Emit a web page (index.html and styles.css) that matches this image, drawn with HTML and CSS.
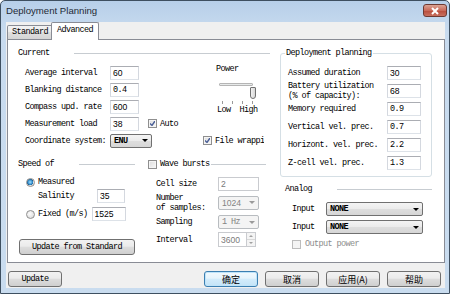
FILE: index.html
```html
<!DOCTYPE html>
<html lang="en">
<head>
    <meta charset="UTF-8">
    <title>Deployment Planning</title>
    <link rel="stylesheet" href="styles.css">
</head>
<body>
<div class="window">
    <div class="titlebar">
        <span class="title">Deployment Planning</span>
        <span class="close">
            <svg width="10" height="8" viewBox="0 0 10 8"><path d="M2 1 L8 7 M8 1 L2 7" stroke="#fff" stroke-width="2"/></svg>
        </span>
    </div>
    <div class="client">
        <div class="tabs">
            <div class="tab">Standard</div>
            <div class="tab active">Advanced</div>
        </div>
        <div class="pane">
            <div class="col-left">
                <div class="sec-head current-head"><span>Current</span><i class="rule"></i></div>
                <div class="current">
                    <span class="lbl">Average interval</span>
                    <input class="field sans w29" value="60">
                    <div class="power">
                        <div class="power-title">Power</div>
                        <div class="slider">
                            <div class="track"></div>
                            <div class="thumb"></div>
                        </div>
                        <div class="ticks"><i></i><i></i><i></i><i></i></div>
                        <div class="lowhigh"><span>Low</span><span>High</span></div>
                    </div>
                    <span class="lbl">Blanking distance</span>
                    <input class="field w29" value="0.4">
                    <span class="lbl">Compass upd. rate</span>
                    <input class="field sans w29" value="600">
                    <span class="lbl">Measurement load</span>
                    <div class="inline">
                        <input class="field sans w29" value="38">
                        <span class="check checked auto-check"></span><span>Auto</span>
                    </div>
                    <span class="lbl">Coordinate system:</span>
                    <div class="combo w42"><b>ENU</b><span class="arrow"></span></div>
                    <div class="inline clip"><span class="check checked"></span><span>File wrapping</span></div>
                </div>
                <div class="lower">
                    <div class="speed">
                        <div class="sec-head"><span>Speed of</span><i class="rule"></i></div>
                        <div class="radio-row first"><span class="radio on"></span><span>Measured</span></div>
                        <div class="salinity"><span class="lbl-sal">Salinity</span><input class="field sans w28" value="35"></div>
                        <div class="radio-row fixed"><span class="radio"></span><span>Fixed (m/s)</span><input class="field sans w34" value="1525"></div>
                        <div class="btn update-std">Update from Standard</div>
                    </div>
                    <div class="wave">
                        <div class="sec-head wave-head"><span class="check"></span><span class="wave-title">Wave bursts</span><i class="rule"></i></div>
                        <div class="wrow cell"><span class="wlbl">Cell size</span><input class="field sans w41" value="2" disabled></div>
                        <div class="wrow samples"><span class="wlbl">Number<br>of samples:</span><div class="combo w41 off"><span class="sans">1024</span><span class="arrow"></span></div></div>
                        <div class="wrow sampling"><span class="wlbl">Sampling</span><div class="combo w41 off"><span>1 Hz</span><span class="arrow"></span></div></div>
                        <div class="wrow interval"><span class="wlbl">Interval</span><input class="field sans w29 spin-field" value="3600" disabled><span class="spin"><i class="up"></i><i class="down"></i></span></div>
                    </div>
                </div>
            </div>
            <div class="col-right">
                <div class="group">
                    <div class="group-title">Deployment planning</div>
                    <div class="grow first"><span class="glbl">Assumed duration</span><input class="field sans w34" value="30"></div>
                    <div class="grow"><span class="glbl two">Battery utilization<br>(% of capacity):</span><input class="field sans w34" value="68"></div>
                    <div class="grow"><span class="glbl">Memory required</span><input class="field w34" value="0.9"></div>
                    <div class="grow"><span class="glbl">Vertical vel. prec.</span><input class="field w34" value="0.7"></div>
                    <div class="grow"><span class="glbl">Horizont. vel. prec.</span><input class="field w34" value="2.2"></div>
                    <div class="grow"><span class="glbl">Z-cell vel. prec.</span><input class="field w34" value="1.3"></div>
                </div>
                <div class="sec-head analog-head"><span>Analog</span><i class="rule"></i></div>
                <div class="arow first"><span class="albl">Input</span><div class="combo w97"><b>NONE</b><span class="arrow"></span></div></div>
                <div class="arow"><span class="albl">Input</span><div class="combo w97"><b>NONE</b><span class="arrow"></span></div></div>
                <div class="arow out"><span class="check off"></span><span class="grey">Output power</span></div>
            </div>
        </div>
        <div class="buttons">
            <div class="btn">Update</div>
            <div class="btn cjk default">确定</div>
            <div class="btn cjk">取消</div>
            <div class="btn cjk">应用(A)</div>
            <div class="btn cjk">帮助</div>
        </div>
    </div>
</div>
</body>
</html>
```
FILE: styles.css
```css
body {
    margin: 0;
    width: 450px;
    height: 294px;
    overflow: hidden;
    background: #fff;
    font-family: "Liberation Mono", monospace;
    font-size: 8.5px;
    letter-spacing: -0.6px;
    color: #000;
}
.window {
    width: 450px;
    height: 294px;
    box-sizing: border-box;
    border: 1px solid #3e4f60;
    border-radius: 5px 5px 0 0;
    background: linear-gradient(#b7cfe9, #c8dbef 30px, #c9dcef);
    display: flex;
    flex-direction: column;
}
.titlebar {
    height: 21px;
    flex: none;
    display: flex;
    align-items: center;
    padding: 0 2px 2px 5px;
    box-sizing: border-box;
}
.title {
    font-family: "Liberation Sans", Arial, sans-serif;
    font-size: 9.6px;
    letter-spacing: 0;
    color: #1e2a36;
}
.close {
    margin-left: auto;
    align-self: flex-start;
    margin-top: 3px;
    width: 24px;
    height: 13px;
    box-sizing: border-box;
    border: 1px solid #6e3a33;
    border-radius: 3px;
    background: linear-gradient(#dba394, #c96a5a 50%, #b84b3b 51%, #c8705f);
    display: flex;
    align-items: center;
    justify-content: center;
}
.client {
    flex: 1;
    margin: 0 4px 5px 5px;
    background: #f0f0f0;
    display: flex;
    flex-direction: column;
    padding-left: 1px;
}
.tabs {
    height: 17px;
    flex: none;
    display: flex;
    align-items: flex-end;
}
.tab {
    width: 46px;
    height: 14px;
    box-sizing: border-box;
    border: 1px solid #898c95;
    border-bottom: none;
    border-radius: 2px 2px 0 0;
    background: linear-gradient(#f3f3f3, #ebebeb 50%, #dfdfdf 50%, #d5d5d5);
    text-align: center;
    line-height: 13px;
}
.tab.active {
    width: 48px;
    height: 18px;
    margin-left: -2px;
    margin-bottom: -1px;
    background: #fff;
    position: relative;
    z-index: 1;
    line-height: 15px;
}
.pane {
    height: 224px;
    flex: none;
    box-sizing: border-box;
    border: 1px solid #898c95;
    background: #fff;
    display: flex;
}
.col-left {
    width: 262px;
    flex: none;
    padding-left: 10px;
    box-sizing: border-box;
}
.sec-head {
    display: flex;
    align-items: center;
    height: 12px;
    white-space: nowrap;
}
.rule {
    flex: 1;
    height: 1px;
    background: #c7ccd1;
    margin-left: 24px;
}
.current-head {
    margin-top: 7px;
}
.current {
    margin-top: 5px;
    padding-left: 7px;
    display: grid;
    grid-template-columns: 85px 93px 1fr;
    grid-auto-rows: 17px;
    align-items: center;
}
.current .lbl {
    grid-column: 1;
    white-space: nowrap;
}
.inline {
    display: flex;
    align-items: center;
    white-space: nowrap;
}
.clip {
    width: 61px;
    overflow: hidden;
}
.clip .check {
    margin-right: 3px;
}
.auto-check {
    margin: 0 3px 0 9px;
}
.field {
    height: 14px;
    box-sizing: border-box;
    border: 1px solid #abadb3;
    border-color: #abadb3 #d4d8df #dde2e8 #d4d8df;
    padding: 0 2px;
    margin: 0;
    font: inherit;
    letter-spacing: inherit;
    color: #000;
    background: #fff;
    outline: none;
}
.field:disabled {
    color: #7a7a7a;
    border-color: #c9cbcf;
}
.sans {
    font-family: "Liberation Sans", Arial, sans-serif;
    font-size: 8.6px;
    letter-spacing: 0;
}
.w28 { width: 28px; }
.w29 { width: 29px; }
.w34 { width: 34px; }
.w41 { width: 41px; }
.w42 { width: 42px; }
.w97 { width: 97px; }
.power {
    grid-column: 3;
    grid-row: 1 / span 3;
    align-self: start;
    padding-left: 13px;
}
.power-title {
    height: 10px;
    line-height: 10px;
}
.slider {
    position: relative;
    width: 38px;
    height: 18px;
    margin-left: 3px;
}
.track {
    margin-top: 9px;
    width: 34px;
    height: 3px;
    box-sizing: border-box;
    border: 1px solid #b5b5b5;
    border-radius: 1px;
    background: #e7eaea;
}
.thumb {
    position: absolute;
    left: 31px;
    top: 4px;
    width: 6px;
    height: 12px;
    box-sizing: border-box;
    border: 1px solid #707070;
    border-radius: 1px 1px 3px 3px;
    background: linear-gradient(90deg, #f2f2f2, #d6d6d6);
}
.ticks {
    width: 31px;
    margin-left: 6px;
    height: 4px;
    display: flex;
    justify-content: space-between;
}
.ticks i {
    width: 1px;
    height: 3px;
    background: #9a9a9a;
}
.lowhigh {
    display: flex;
    gap: 9px;
    margin-left: 1px;
    height: 10px;
    line-height: 10px;
}
.check {
    width: 9px;
    height: 9px;
    flex: none;
    box-sizing: border-box;
    border: 1px solid #8f8f8f;
    background: linear-gradient(135deg, #dcdcdc, #f8f8f8);
    box-shadow: inset 0 0 0 1px #f4f4f4;
    display: inline-block;
}
.check.checked {
    background: url("data:image/svg+xml,%3Csvg xmlns='http://www.w3.org/2000/svg' width='7' height='7'%3E%3Cpath d='M1 3.5 L3 5.5 L6 1' fill='none' stroke='%234a5f97' stroke-width='1.4'/%3E%3C/svg%3E") center no-repeat, linear-gradient(135deg, #dcdcdc, #f8f8f8);
}
.check.off {
    border-color: #bcbcbc;
    background: #f4f4f4;
}
.grey {
    color: #8d8d8d;
}
.combo {
    height: 14px;
    box-sizing: border-box;
    border: 1px solid #707070;
    border-radius: 2px;
    background: linear-gradient(#f4f4f4, #ebebeb 50%, #dedede 50%, #d6d6d6);
    display: flex;
    align-items: center;
    padding: 0 3px 0 3px;
    white-space: nowrap;
}
.combo .arrow {
    margin-left: auto;
    width: 0;
    height: 0;
    border-left: 3px solid transparent;
    border-right: 3px solid transparent;
    border-top: 3px solid #000;
}
.combo.off {
    border-color: #b8bcc0;
    background: #f4f4f4;
    color: #838383;
}
.combo.off .arrow {
    border-top-color: #9a9a9a;
}
.lower {
    display: flex;
    margin-top: 9px;
}
.speed {
    width: 117px;
    flex: none;
}
.speed .rule {
    margin-left: 25px;
}
.radio-row {
    display: flex;
    align-items: center;
    padding-left: 8px;
    white-space: nowrap;
}
.radio-row.first {
    height: 12px;
    margin-top: 6px;
}
.radio-row.fixed {
    height: 14px;
    margin-top: 4px;
}
.radio {
    width: 9px;
    height: 9px;
    box-sizing: border-box;
    border: 1px solid #8f8f8f;
    border-radius: 50%;
    background: radial-gradient(circle at 40% 40%, #fcfcfc, #d4d4d4);
    margin-right: 3px;
    flex: none;
}
.radio.on {
    background: radial-gradient(circle at 45% 45%, #9ee0ff 0, #2c85c5 45%, #1d5a8a 55%, #e6e6e6 62%, #d0d0d0);
}
.fixed .field {
    margin-left: 4px;
}
.salinity {
    display: flex;
    align-items: center;
    height: 14px;
    margin-top: 1px;
    padding-left: 20px;
}
.lbl-sal {
    width: 59px;
}
.btn {
    height: 16px;
    box-sizing: border-box;
    border: 1px solid #707070;
    border-radius: 3px;
    background: linear-gradient(#f2f2f2, #ebebeb 45%, #dddddd 50%, #cfcfcf);
    display: flex;
    align-items: center;
    justify-content: center;
    white-space: nowrap;
}
.update-std {
    width: 116px;
    margin: 18px 0 0 1px;
}
.wave {
    width: 119px;
    flex: none;
    margin-left: 12px;
}
.wave-head {
    padding-left: 1px;
}
.wave-title {
    margin-left: 3px;
}
.wave-head .rule {
    margin-left: 1px;
}
.wrow {
    display: flex;
    align-items: center;
    padding-left: 9px;
}
.wlbl {
    width: 62px;
    flex: none;
    line-height: 10px;
    white-space: nowrap;
}
.wrow.cell {
    height: 14px;
    margin-top: 7px;
}
.wrow.samples {
    height: 17px;
    margin-top: 3px;
}
.wrow.sampling {
    height: 14px;
    margin-top: 4px;
}
.wrow.interval {
    height: 15px;
    margin-top: 3px;
}
.spin-field {
    height: 15px;
}
.spin {
    width: 9px;
    height: 15px;
    box-sizing: border-box;
    border: 1px solid #c9cbcf;
    border-left: none;
    display: flex;
    flex-direction: column;
    background: #f4f4f4;
}
.spin i {
    flex: 1;
    display: flex;
    align-items: center;
    justify-content: center;
}
.spin .up {
    border-bottom: 1px solid #d8d8d8;
}
.spin .up::before {
    content: "";
    border-left: 2px solid transparent;
    border-right: 2px solid transparent;
    border-bottom: 2px solid #a0a0a0;
}
.spin .down::before {
    content: "";
    border-left: 2px solid transparent;
    border-right: 2px solid transparent;
    border-top: 2px solid #a0a0a0;
}
.col-right {
    width: 152px;
    flex: none;
    margin-left: 10px;
}
.group {
    margin-top: 13px;
    height: 124px;
    box-sizing: border-box;
    border: 1px solid #d5dfe5;
    border-radius: 3px;
    padding-left: 7px;
}
.group-title {
    margin: -7px 0 0 -3px;
    width: fit-content;
    padding: 0 1px;
    height: 12px;
    line-height: 12px;
    background: #fff;
}
.grow {
    display: flex;
    align-items: center;
    height: 18px;
}
.grow.first {
    margin-top: 5px;
}
.glbl {
    width: 99px;
    flex: none;
    white-space: nowrap;
    line-height: 10px;
}
.analog-head {
    margin-top: 6px;
    padding-left: 5px;
}
.analog-head .rule {
    margin-left: 25px;
}
.arow {
    display: flex;
    align-items: center;
    height: 14px;
    margin-top: 4px;
    padding-left: 12px;
}
.arow.first {
    margin-top: 7px;
}
.arow.out {
    height: 12px;
}
.arow.out .check {
    margin-right: 4px;
}
.albl {
    width: 34px;
    flex: none;
}
.buttons {
    display: flex;
    gap: 7px;
    margin-top: 8px;
    padding: 0 4px 0 1px;
}
.buttons .btn {
    width: 54px;
}
.buttons .btn:first-child {
    margin-right: auto;
}
.cjk {
    font-family: "Noto Sans CJK SC", sans-serif;
    font-size: 9px;
    letter-spacing: 0;
}
.btn.default {
    border-color: #3c7fb1;
    background: linear-gradient(#f2f9fd, #e6f4fc 45%, #d3ecfb 50%, #c4e4f8);
    box-shadow: inset 0 0 0 1px #bfe4fa;
}
```
